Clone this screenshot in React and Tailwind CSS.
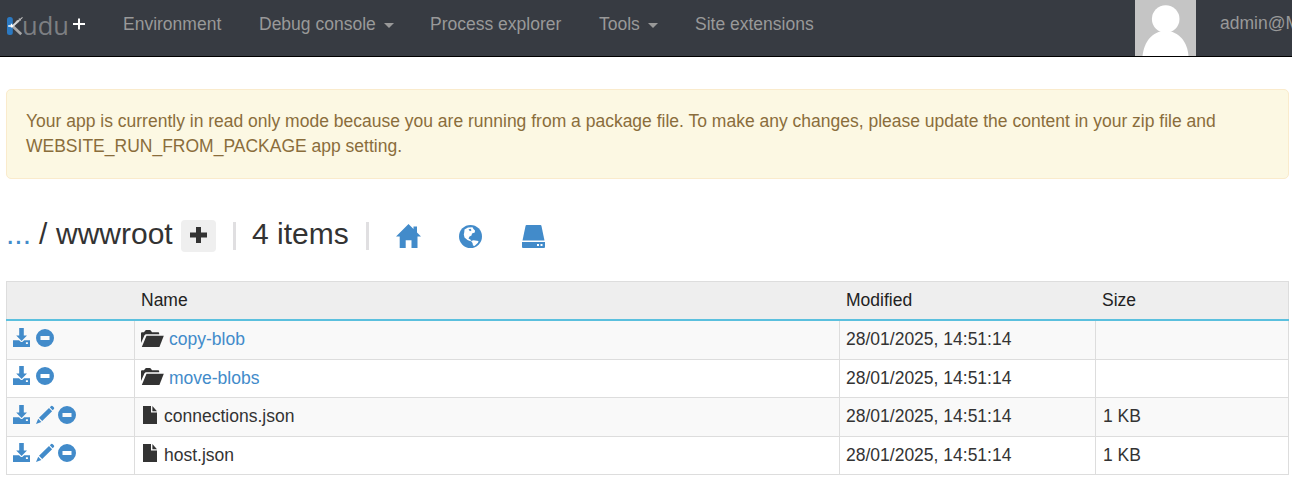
import React from "react";

function Download() {
  return (
    <svg className="block h-[19px] w-[17px] shrink-0 fill-[#428bca]" viewBox="0 0 17 19">
      <path d="M6.200 0h4.600v7.500H14L8.600 13 3.200 7.500H6.200z" />
      <path fillRule="evenodd" d="M0 12.300h6l2 1.600h1.200l2-1.600H17V19H0zM12.900 14.300v1.800h2v-1.800z" />
    </svg>
  );
}

function Minus() {
  return (
    <svg className="block h-[19px] w-[19px] shrink-0 fill-[#428bca]" viewBox="0 0 19 19">
      <path fillRule="evenodd" d="M9 1a9 9 0 1 0 0 18a9 9 0 1 0 0-18zM4.500 8h9v4h-9z" />
    </svg>
  );
}

function Pencil() {
  return (
    <svg className="block h-[19px] w-[19px] shrink-0 fill-[#428bca]" viewBox="0 0 19 19">
      <path d="M13.800 2.300 15.200 1Q16 .6 16.800 1.200L18 2.500Q18.500 3.300 17.900 4.100L16.700 5.300zM13 3.100l3.100 3.100L6.200 16l-3.200-3.200zM2.200 13.800l3.200 3.200L0 19z" />
    </svg>
  );
}

function Folder() {
  return (
    <svg className="block h-[17px] w-[23px] shrink-0 fill-[#333]" viewBox="0 0 23 17">
      <path d="M0 13V3.200Q0 2.200 1 2.200H3L4.300.5Q4.600 0 5.200 0H8.800Q9.400 0 9.800.5L11 2.200h6.200Q18.200 2.200 18.200 3.400V4.300H5.200Q4 4.300 3.500 5.300z" />
      <path d="M5.500 5.700H22.800L18.400 17H.8z" />
    </svg>
  );
}

function FileIcon() {
  return (
    <svg className="block h-[18px] w-[14px] shrink-0 fill-[#333]" viewBox="0 0 14 18">
      <path d="M0 0H8V6.500H14V18H0z" />
      <path d="M9.400 0 14 5.200H9.400z" />
    </svg>
  );
}

function Logo() {
  return (
    <div className="flex w-[79px] shrink-0 pt-[12px]">
      <svg className="mt-[4px] block h-[20px] w-[17px] shrink-0" viewBox="0 0 17 20">
        <rect x="0" y="1" width="5.800" height="18" rx="2.500" fill="#2b79c2" />
        <path d="M6 10.500 14.200 18.300" stroke="#a8a8a8" strokeWidth="2.800" fill="none" />
        <path d="M5 10.800 12 4.200" stroke="#d8d8d8" strokeWidth="2" fill="none" />
        <path d="M11 5.400 15.500 1.400M9 4.800l2 2.200M12 2.500l1.800 2" stroke="#c4c4c4" strokeWidth="1.100" fill="none" />
        <path d="M1.200 10H6M4.500 7.800v3.800" stroke="#fff" strokeWidth="1.400" />
      </svg>
      <span className="-ml-[2px] w-[48px] font-['Open_Sans',sans-serif] text-[25.5px] font-medium leading-[26px] text-[#7d7f83]">udu</span>
      <svg className="ml-[3px] mt-[6px] block h-[12px] w-[12px] shrink-0" viewBox="0 0 12 12">
        <path d="M6 .5v11M0 6h12" stroke="#fff" strokeWidth="2" />
      </svg>
    </div>
  );
}

function Caret() {
  return <span className="ml-[8px] mt-[11px] h-0 w-0 border-x-[5px] border-t-[5px] border-x-transparent border-t-[#999]" />;
}

function Navbar() {
  return (
    <nav className="flex h-[57px] overflow-hidden border-b border-black bg-[#373b42] pl-[7px] text-[#999]">
      <Logo />
      <div className="flex pt-[12px] whitespace-nowrap">
        <a className="ml-[37px] w-[136px]">Environment</a>
        <a className="flex w-[171px]">Debug console<Caret /></a>
        <a className="w-[169px]">Process explorer</a>
        <a className="flex w-[96px]">Tools<Caret /></a>
        <a className="w-[440px]">Site extensions</a>
      </div>
      <svg className="block h-[56px] w-[61px] shrink-0" viewBox="0 0 61 56">
        <path fill="#c5c5c5" d="M0 0h61v56H0z" />
        <circle cx="30.700" cy="19" r="13.800" fill="#fff" />
        <path d="M7.500 56C9 42 17 31 30.500 31S52.500 42 53.500 56z" fill="#fff" />
      </svg>
      <span className="ml-[24px] pt-[11px] whitespace-nowrap">admin@M</span>
    </nav>
  );
}

function Heading() {
  return (
    <h3 className="mt-[34px] flex h-[56px] items-start whitespace-nowrap pt-px text-[30px] leading-[40px]">
      <span className="w-[33px] text-[#428bca]">...</span>
      <span className="w-[17px]">/</span>
      <span className="w-[125px]">wwwroot</span>
      <button className="mt-[6px] flex h-[32px] w-[35px] items-center justify-center rounded-[4px] bg-[#efefef]">
        <svg className="-mt-[2px] block h-[16px] w-[17px]" viewBox="0 0 17 16">
          <path d="M6 0h5v5.500h6v5h-6V16H6v-5.500H0v-5h6z" fill="#333" />
        </svg>
      </button>
      <span className="ml-[17px] mt-[8px] h-[28px] w-[3px] bg-[#e0dfe1]" />
      <span className="ml-[16px] w-[114px]">4 items</span>
      <span className="mt-[8px] h-[28px] w-[3px] bg-[#e0dfe1]" />
      <div className="ml-[27px] mt-[10px] flex items-start fill-[#428bca]">
        <svg className="block h-[24px] w-[25px]" viewBox="0 0 25 24">
          <path d="M12.500 0 17.500 5V2.500H21V8.500L25 12.500H21.500V24H15.500V16.200H9.700V24H3.700V12.500H0z" />
        </svg>
        <svg className="ml-[38px] mt-[1px] block h-[24px] w-[24px]" viewBox="0 0 24 24">
          <circle cx="11.500" cy="11.500" r="11.500" />
          <path fill="#fff" d="M5.500 4.500 9 2.500 13.500 2.200 14.500 4 16 5.500 15.800 7.500 13 8.500 12.500 10.500 10.500 11.500 9.500 13.500 12 15 11.500 16.200 8.500 15 5.500 12.500 4.800 9.500 5.300 7z" />
          <path fill="#fff" d="M12 16 14.500 15.300 19.500 16 19 17.800 15.500 21 14 20.500 13.500 18z" />
          <path d="M9.500 4.500 11.500 3.800 12.500 5.300 11 6.300z" />
        </svg>
        <svg className="ml-[39px] mt-[1px] block h-[23px] w-[23px]" viewBox="0 0 23 23">
          <path d="M4.500 0H18.500Q19.200 0 19.400.8L22.500 15.500H.5L3.600.8Q3.800 0 4.500 0z" />
          <path fillRule="evenodd" d="M0 17H23V22Q23 23 22 23H1Q0 23 0 22zM15 19v2h2v-2zM18.500 19v2h2v-2z" />
        </svg>
      </div>
    </h3>
  );
}

const rows = [
  { name: "copy-blob", dir: true, size: "", style: "h-[39px] bg-[#f9f9f9]", icon: "mt-[7px]", type: "mt-[9px]" },
  { name: "move-blobs", dir: true, size: "", style: "h-[38px] bg-white", icon: "mt-[6px]", type: "mt-[8px]" },
  { name: "connections.json", dir: false, size: "1 KB", style: "h-[39px] bg-[#f9f9f9]", icon: "mt-[7px]", type: "ml-[2px] mt-[8px]" },
  { name: "host.json", dir: false, size: "1 KB", style: "h-[38px] bg-white", icon: "mt-[6px]", type: "ml-[2px] mt-[7px]" },
];

function Row({ row }) {
  return (
    <div className={`grid grid-cols-[127px_705px_256px_193px] border-b border-[#ddd] ${row.style}`}>
      <div className="flex items-start pl-[6px]">
        <div className={`flex gap-[6px] ${row.icon}`}>
          <Download />
          {row.dir ? <Minus /> : <div className="flex gap-[3px]"><Pencil /><Minus /></div>}
        </div>
      </div>
      <div className="flex items-start border-l border-[#ddd] pl-[6px]">
        <div className={row.type}>{row.dir ? <Folder /> : <FileIcon />}</div>
        <span className={`pt-[6px] ${row.dir ? "ml-[5px] text-[#428bca]" : "ml-[7px]"}`}>{row.name}</span>
      </div>
      <div className="border-l border-[#ddd] pl-[6px] pt-[6px]">28/01/2025, 14:51:14</div>
      <div className="border-l border-[#ddd] pl-[7px] pt-[6px]">{row.size}</div>
    </div>
  );
}

export default function App() {
  return (
    <div className="h-[480px] overflow-hidden bg-white font-['Liberation_Sans',Arial,sans-serif] text-[17.5px] leading-[25px] text-[#333]">
      <Navbar />
      <main className="pl-[6px] pr-[3px] pt-[32px]">
        <div className="h-[90px] rounded-[5px] border border-[#faebcc] bg-[#fcf8e3] pl-[19px] pt-[19px] text-[#8a6d3b]">
          <p className="whitespace-nowrap">
            Your app is currently in read only mode because you are running from a package file. To make any changes, please update the content in your zip file and
            <br />
            WEBSITE_RUN_FROM_PACKAGE app setting.
          </p>
        </div>
        <Heading />
        <div className="mt-[12px] border-x border-t border-[#ddd]">
          <div className="bg-[#eee]">
            <div className="grid h-[37px] grid-cols-[127px_705px_256px_193px] pt-[6px] text-[#222]">
              <span />
              <span className="pl-[7px]">Name</span>
              <span className="pl-[7px]">Modified</span>
              <span className="pl-[7px]">Size</span>
            </div>
            <div className="-mx-px h-[2px] bg-[#5bc0de]" />
          </div>
          {rows.map((row) => <Row key={row.name} row={row} />)}
        </div>
      </main>
    </div>
  );
}
